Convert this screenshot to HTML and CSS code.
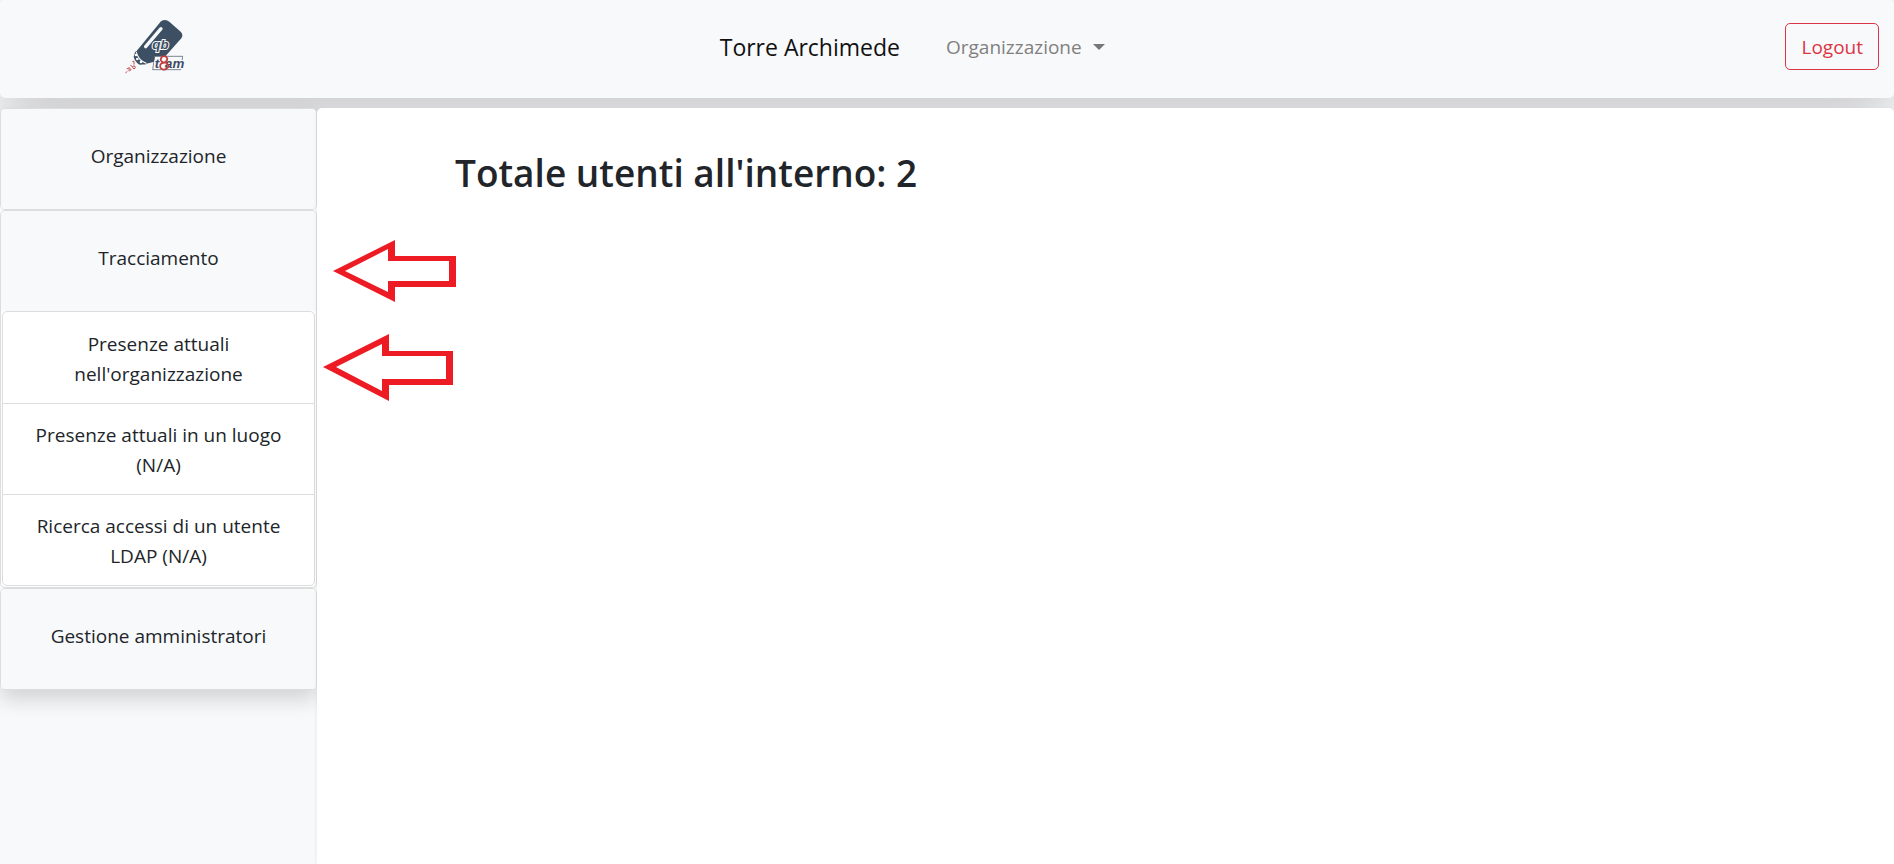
FILE: index.html
```html
<!DOCTYPE html>
<html lang="it">
<head>
<meta charset="utf-8">
<title>Torre Archimede</title>
<link rel="stylesheet" href="styles.css">
</head>
<body>
<header class="navbar">
  <a class="logo" href="#" aria-label="qb team">
    <svg width="90" height="70" viewBox="9 4 270 210" aria-hidden="true">
      <path d="M150 32q13-9 25 1l34 30q9 9 2 20L163 137l-33 16-30 8q-11-5-20-19-5-9-5-19z" fill="#3d4f63"/>
      <path d="M104 108L150 54" stroke="#f8f9fb" stroke-width="10" stroke-linecap="round"/>
      <path d="M75 124q8 27 31 34" stroke="#f8f9fb" stroke-width="4" fill="none"/>
      <path d="M73 121l-5 17q3 15 18 24l20-1q-25-8-33-40z" fill="#3d4f63"/>
      <g fill="#f8f9fb"><circle cx="75" cy="133" r="4"/><circle cx="79" cy="145" r="4"/><circle cx="90" cy="154" r="4"/></g>
      <path d="M131 137h84l-6 40h-84z" fill="#f8f9fb" stroke="#3d4f63" stroke-width="2"/>
      <g class="word">
        <text x="124" y="116">qb</text>
        <text x="131" y="173">t</text>
        <text x="162" y="173">am</text>
      </g>
      <path d="M169 143q-4-9-14-6-8 5-5 13 4 6 14 6 10 4 7 13-6 10-16 7-10-4-7-14 3-6 13-6 8-4 8-13z" fill="none" stroke="#c63c3e" stroke-width="5"/>
      <g fill="none" stroke="#c94d4d" stroke-width="3"><path d="M64 152h5v10M43 187l6-5M53 169l6 7-7 3M58 164l7 4M47 174h7M55 182l5-5"/><circle cx="69" cy="170" r="4"/></g>
    </svg>
  </a>
  <nav class="menu">
    <a class="brand" href="#">Torre Archimede</a>
    <a class="drop" href="#">Organizzazione<span class="caret"></span></a>
  </nav>
  <button class="logout" type="button">Logout</button>
</header>
<div class="layout">
  <aside class="side">
    <nav class="cards">
      <div class="card"><a class="head" href="#">Organizzazione</a></div>
      <div class="card">
        <a class="head" href="#">Tracciamento</a>
        <div class="list">
          <a class="item" href="#">Presenze attuali nell'organizzazione</a>
          <a class="item" href="#">Presenze attuali in un luogo (N/A)</a>
          <a class="item" href="#">Ricerca accessi di un utente LDAP (N/A)</a>
        </div>
      </div>
      <div class="card"><a class="head" href="#">Gestione amministratori</a></div>
    </nav>
  </aside>
  <main class="content">
    <h1>Totale utenti all'interno: 2</h1>
    <svg class="arrows" width="140" height="170" viewBox="320 235 140 170" aria-hidden="true">
      <path fill="#ed1c24" fill-rule="evenodd" d="M333 271L395 240V256H456V287H395V302ZM345 271L388 292V281H449V261H388V249ZM323 367L389 334V351H453V385H389V401ZM336 367L382 391V379H446V356H382V344Z"/>
    </svg>
  </main>
</div>
</body>
</html>
```
FILE: styles.css
```css
* { box-sizing: border-box; }
body {
  margin: 0;
  min-height: 100vh;
  display: flex;
  flex-direction: column;
  gap: 10px;
  background: #f8f9fb;
  color: #212529;
  font: 19px/30px "Segoe UI", "Open Sans", sans-serif;
}
a { color: inherit; text-decoration: none; }
.navbar {
  display: grid;
  grid-template-columns: 38% 1fr auto;
  align-items: center;
  height: 98px;
  padding-bottom: 5px;
  background: #f8f9fb;
  border-radius: 5px;
  box-shadow: 0 20px 60px rgba(0, 0, 0, .2);
}
.logo { width: 317px; display: flex; justify-content: center; }
.word {
  font: italic 700 40px "Liberation Sans Narrow", "Liberation Sans", sans-serif;
  fill: #3d4f63;
  stroke: #f8f9fb;
  stroke-width: 6px;
  paint-order: stroke;
}
.menu { display: flex; align-items: center; gap: 46px; }
.brand { font-size: 23px; line-height: 38px; color: #111; }
.drop { display: flex; align-items: center; gap: 11px; color: #808080; }
.caret {
  border: 6px solid transparent;
  border-top-color: #777;
  border-bottom: 0;
}
.logout {
  height: 47px;
  margin-right: 15px;
  padding: 0 15px;
  border: 1px solid #dc3545;
  border-radius: 5px;
  background: transparent;
  color: #dc3545;
  font: inherit;
}
.layout { flex: 1; display: flex; }
.side { width: 317px; flex: none; }
.cards {
  position: relative;
  border-radius: 5px;
  box-shadow: 0 10px 20px rgba(0, 0, 0, .15);
}
.card {
  background: #fff;
  border: 1px solid #dcdddd;
  border-radius: 5px;
  overflow: hidden;
}
.head {
  display: block;
  padding: 32px 25px 38px;
  background: #f8f9fb;
  text-align: center;
}
.list {
  margin: 0 1px 1px;
  padding-top: 1px;
  border: 1px solid #dcdddd;
  border-radius: 5px;
  background: #fff;
}
.item { display: block; padding: 16px 25px 14px; text-align: center; }
.item + .item { border-top: 1px solid #dcdddd; }
.content {
  position: relative;
  flex: 1;
  padding: 40px 138px;
  background: #fff;
  border-radius: 5px 5px 0 0;
  box-shadow: 0 2px 5px rgba(0, 0, 0, .08);
}
h1 { margin: 0; font-size: 37px; line-height: 50px; font-weight: 600; }
.arrows { position: absolute; left: 3px; top: 127px; }
```
